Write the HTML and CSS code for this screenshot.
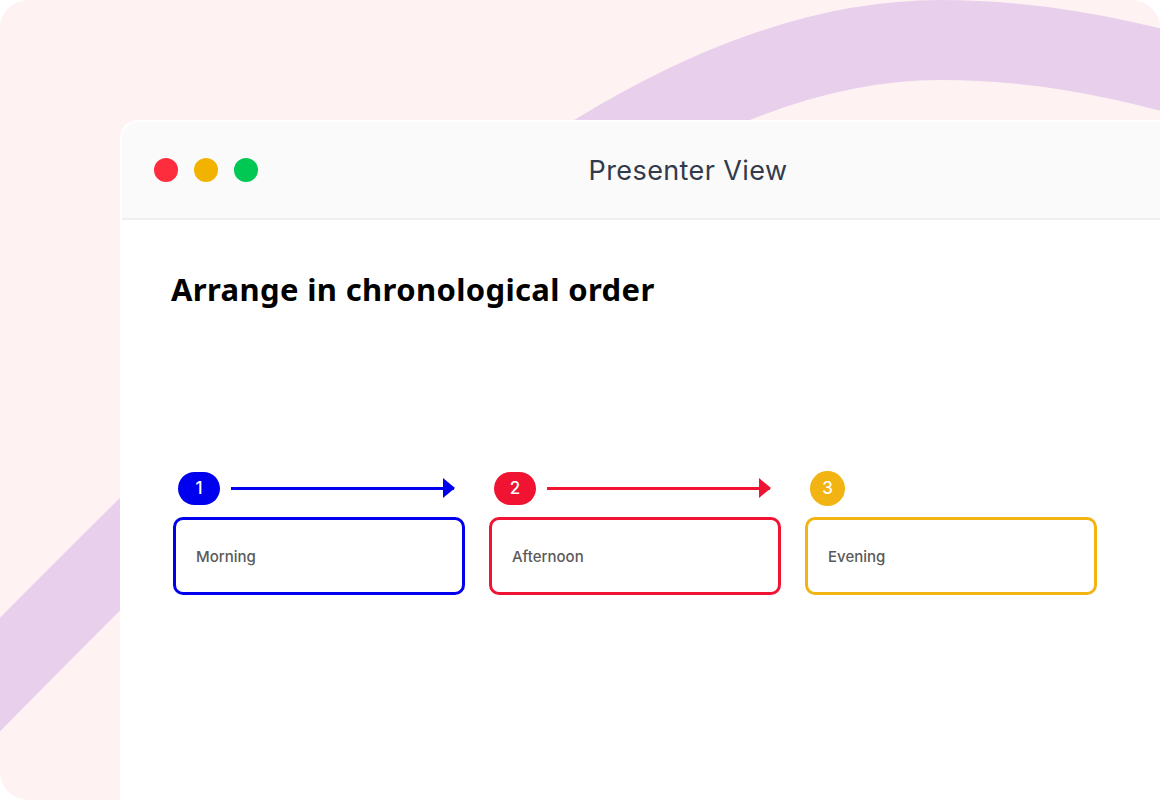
FILE: index.html
```html
<!DOCTYPE html>
<html lang="en">
<head>
    <meta charset="UTF-8">
    <meta name="viewport" content="width=device-width, initial-scale=1.0">
    <title>Presenter View</title>
    <link rel="stylesheet" href="styles.css">
</head>
<body>
    <div class="frame">
        <svg class="swoosh" width="1160" height="800" viewBox="0 0 1160 800">
            <path d="M -40 715 C 300 370, 625 40, 940 40 C 1030 40, 1110 55, 1200 80" fill="none" stroke="#e8d0ec" stroke-width="80"/>
        </svg>

        <div class="window">
            <div class="titlebar">
                <div class="dots">
                    <span class="dot red"></span>
                    <span class="dot yellow"></span>
                    <span class="dot green"></span>
                </div>
                <div class="title">Presenter View</div>
                <div></div>
            </div>

            <div class="content">
                <h1>Arrange in chronological order</h1>

                <div class="steps">
                    <div class="step blue">
                        <div class="step-head">
                            <span class="badge">1</span>
                            <span class="arrow"></span>
                        </div>
                        <div class="step-box">Morning</div>
                    </div>
                    <div class="step red">
                        <div class="step-head">
                            <span class="badge">2</span>
                            <span class="arrow"></span>
                        </div>
                        <div class="step-box">Afternoon</div>
                    </div>
                    <div class="step yellow">
                        <div class="step-head">
                            <span class="badge round">3</span>
                        </div>
                        <div class="step-box">Evening</div>
                    </div>
                </div>
            </div>
        </div>
    </div>
</body>
</html>
```

FILE: styles.css
```css
body {
    margin: 0;
    padding: 0;
    background-color: #ffffff;
    font-family: Inter, "Noto Sans", sans-serif;
}

.frame {
    width: 1160px;
    height: 800px;
    background-color: #fff2f3;
    border-radius: 28px;
    overflow: hidden;
    position: relative;
    padding: 120px 0 0 120px;
    box-sizing: border-box;
}

.swoosh {
    position: absolute;
    top: 0;
    left: 0;
}

.window {
    position: relative;
    width: 1132px;
    height: 700px;
    background-color: #ffffff;
    border-radius: 18px 0 0 0;
    border-top: 2px solid #ffffff;
    border-left: 2px solid #ffffff;
    overflow: hidden;
}

.titlebar {
    height: 96px;
    background-color: #fafafa;
    border-bottom: 2px solid #eeeeee;
    display: grid;
    grid-template-columns: 1fr auto 1fr;
    align-items: center;
}

.dots {
    display: flex;
    gap: 16px;
    padding-left: 32px;
}

.dot {
    width: 24px;
    height: 24px;
    border-radius: 50%;
}

.dot.red { background-color: #fd2d3d; }
.dot.yellow { background-color: #f1b300; }
.dot.green { background-color: #00c853; }

.title {
    font-family: Inter, Roboto, sans-serif;
    font-size: 27px;
    letter-spacing: 0.4px;
    color: #323a4b;
}

.content {
    padding: 0 0 0 49px;
}

h1 {
    font-family: "Noto Sans", sans-serif;
    font-size: 31px;
    font-weight: bold;
    letter-spacing: 0.35px;
    color: #000000;
    margin: 49px 0 0;
    line-height: 40px;
}

.steps {
    display: flex;
    gap: 24px;
    margin-top: 163px;
    margin-left: 2px;
}

.step {
    width: 292px;
}

.step.blue { color: #0000ee; }
.step.red { color: #f01432; }
.step.yellow { color: #f2b412; }

.step-head {
    display: flex;
    align-items: center;
    height: 33px;
    padding-left: 5px;
    padding-right: 11px;
}

.badge {
    width: 42px;
    height: 33px;
    border-radius: 17px;
    background-color: currentColor;
    display: flex;
    align-items: center;
    justify-content: center;
    font-size: 17px;
    font-weight: 500;
    line-height: 1;
    -webkit-text-fill-color: #ffffff;
}

.badge.round {
    width: 35px;
    height: 35px;
    border-radius: 50%;
}

.arrow {
    flex: 1;
    height: 3px;
    margin-left: 11px;
    background-color: currentColor;
    position: relative;
}

.arrow::after {
    content: "";
    position: absolute;
    right: -1px;
    top: -9px;
    border-left: 12px solid currentColor;
    border-top: 10px solid transparent;
    border-bottom: 10px solid transparent;
}

.step-box {
    margin-top: 12px;
    height: 78px;
    box-sizing: border-box;
    border: 3px solid currentColor;
    border-radius: 10px;
    display: flex;
    align-items: center;
    padding-left: 20px;
    font-size: 15px;
    font-weight: 500;
    color: #5a5a5a;
}

.step.blue .step-box { border-color: #0000ee; }
.step.red .step-box { border-color: #f01432; }
.step.yellow .step-box { border-color: #f2b412; }
```
